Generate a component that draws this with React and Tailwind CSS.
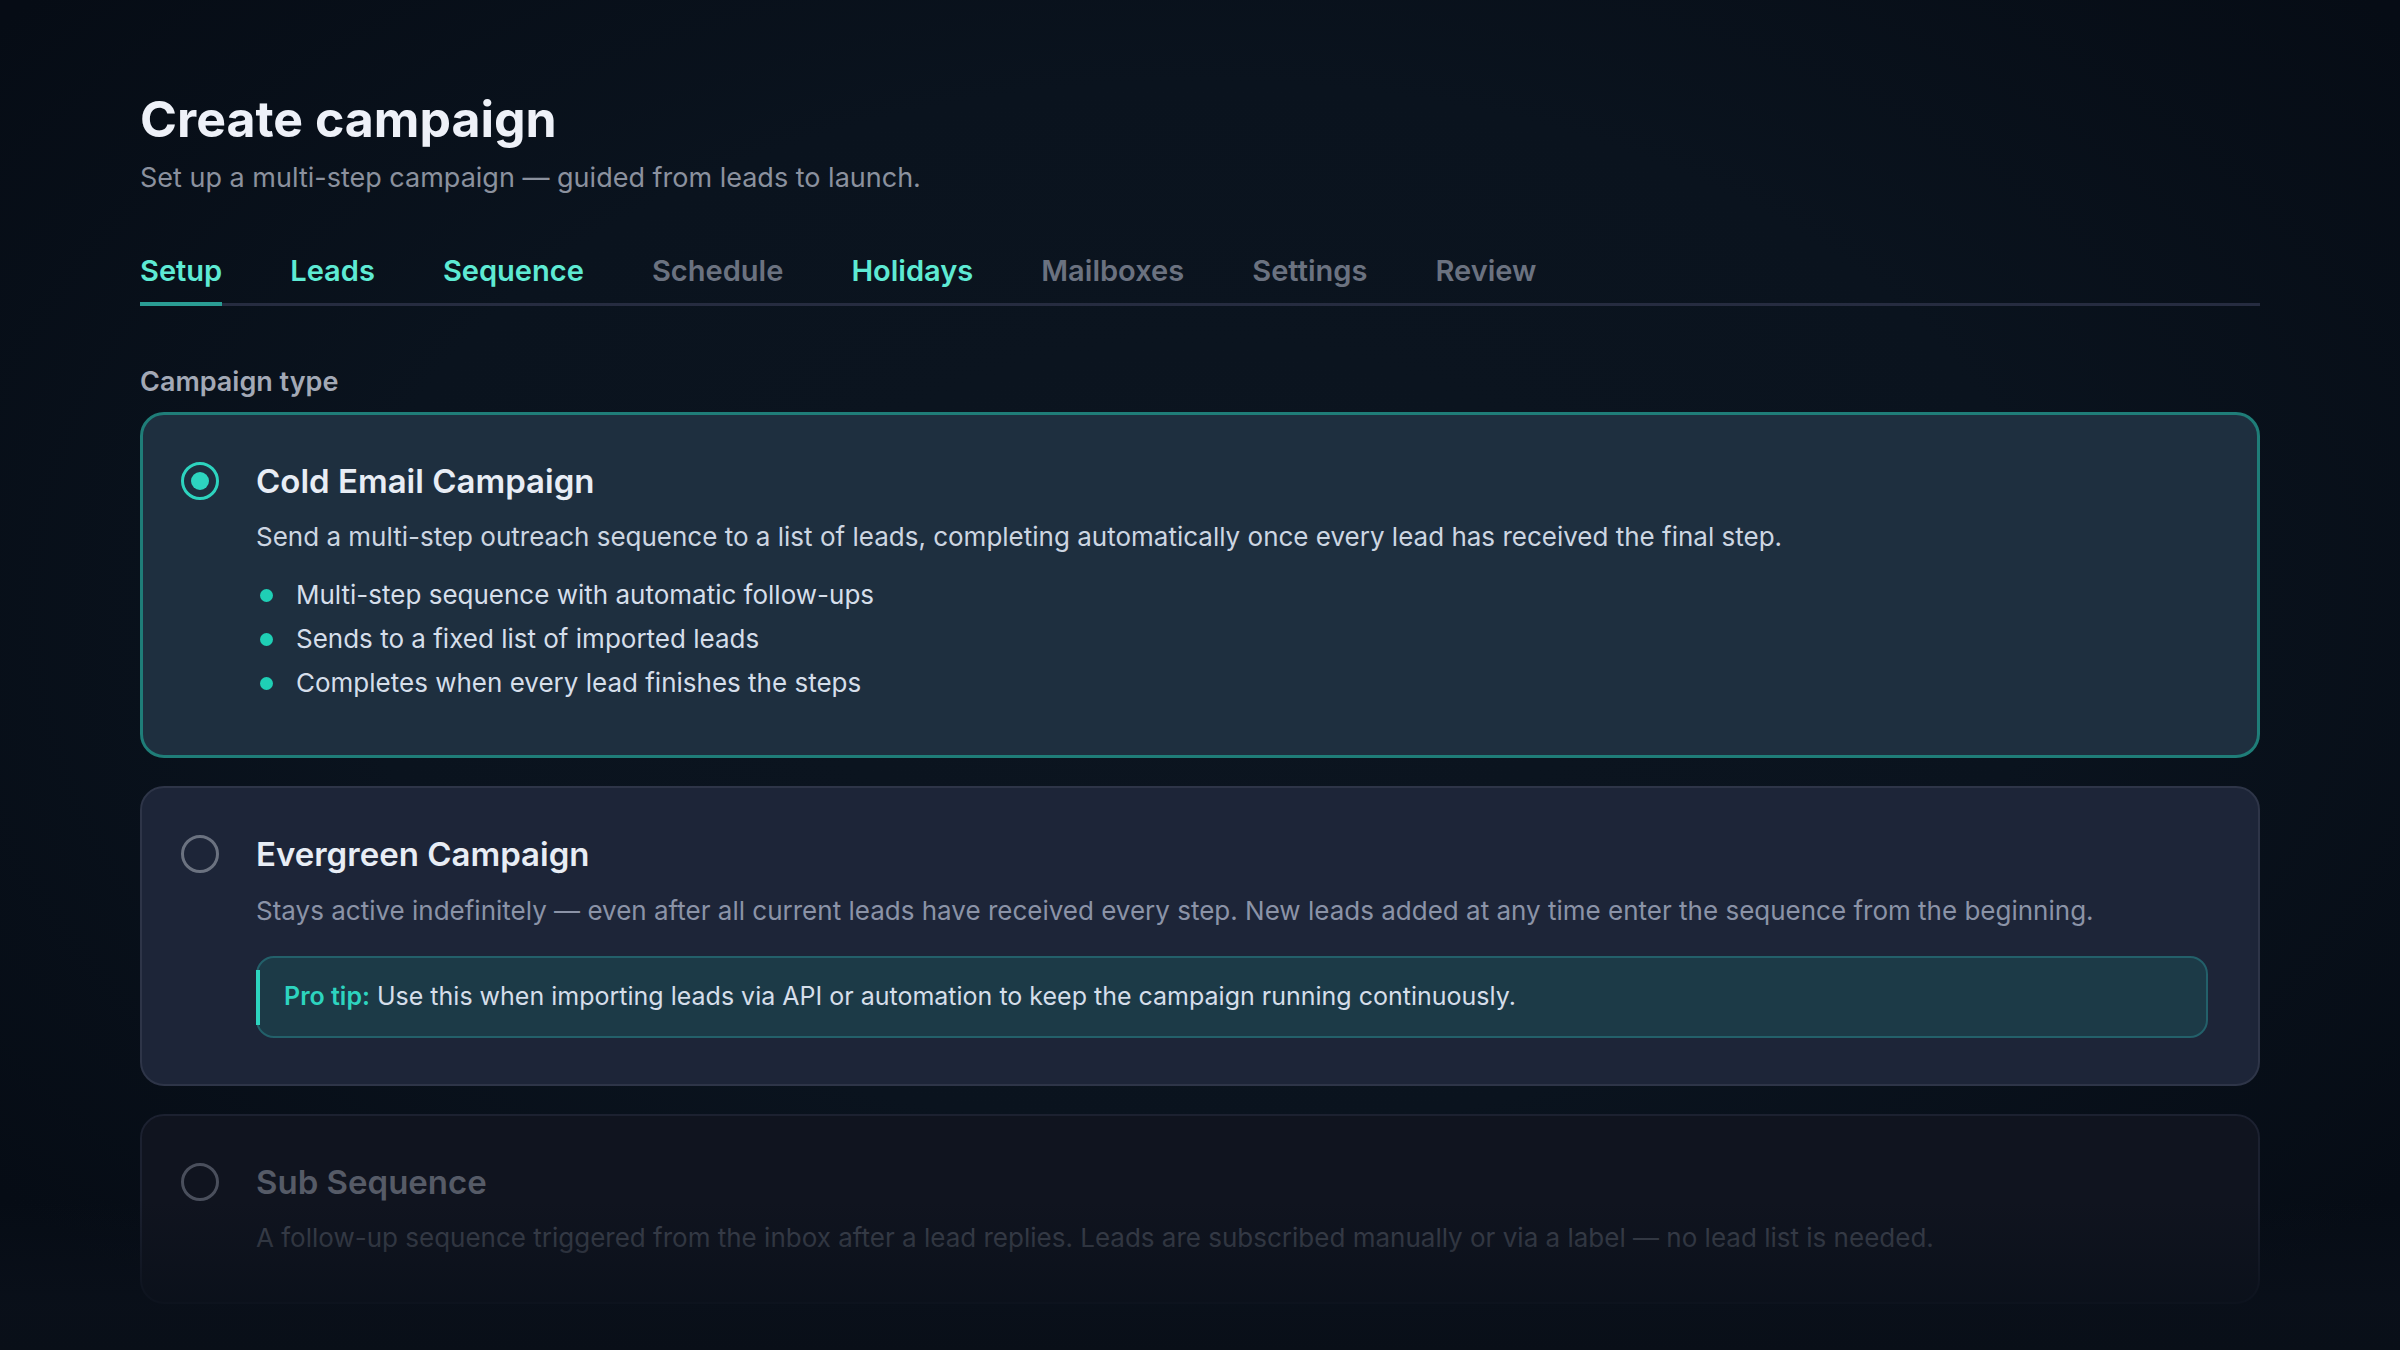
const tabs = [
  { name: "Setup", done: true, active: true },
  { name: "Leads", done: true },
  { name: "Sequence", done: true },
  { name: "Schedule" },
  { name: "Holidays", done: true },
  { name: "Mailboxes" },
  { name: "Settings" },
  { name: "Review" },
];

const bullets = [
  "Multi-step sequence with automatic follow-ups",
  "Sends to a fixed list of imported leads",
  "Completes when every lead finishes the steps",
];

const Radio = ({ checked, dim }) => (
  <div
    className={`flex h-[38px] w-[38px] shrink-0 items-center justify-center rounded-full border-[3px] ${
      checked ? "border-[#2dd4bf]" : dim ? "border-[#4a4f5c]" : "border-[#6b7280]"
    }`}
  >
    {checked && <div className="h-[18px] w-[18px] rounded-full bg-[#2dd4bf]" />}
  </div>
);

const App = () => {
  return (
    <div className="relative h-[1350px] w-full overflow-hidden bg-[#060d16] bg-[radial-gradient(ellipse_at_50%_45%,#0c1520_0%,#0a131e_50%,#060c15_90%)] px-[140px] pt-[90px] font-['Inter',sans-serif]">
      <h1 className="text-[50px] font-bold leading-[58px] text-[#eef1f8]">Create campaign</h1>
      <p className="mt-[11px] text-[27px] leading-[38px] text-[#8b919e]">
        Set up a multi-step campaign — guided from leads to launch.
      </p>

      {/* Tabs */}
      <div className="mt-[54px] flex gap-[68px] border-b-[3px] border-[#262c40]">
        {tabs.map((tab) => (
          <div
            key={tab.name}
            className={`-mb-[3px] border-b-[4px] pb-[11px] text-[29.05px] font-semibold leading-[40px] ${
              tab.active ? "border-[#2a9d94]" : "border-transparent"
            } ${tab.done ? "text-[#5eead4]" : "text-[#6b7280]"}`}
          >
            {tab.name}
          </div>
        ))}
      </div>

      <div className="mb-[12px] mt-[58px] text-[27px] font-semibold leading-[36px] text-[#a3a9b6]">Campaign type</div>

      <div className="flex flex-col gap-[28px]">
        {/* Cold email */}
        <div className="flex gap-[37px] rounded-[24px] border-[3px] border-[#1f7d78] bg-[#1e2f3f] px-[38px] pb-[51px] pt-[46px]">
          <div className="flex h-[40px] items-center"><Radio checked /></div>
          <div className="flex-1">
            <h2 className="text-[33px] font-semibold leading-[40px] text-[#e8edf5]">Cold Email Campaign</h2>
            <p className="mt-[16px] text-[26px] leading-[40px] text-[#cdd6e2]">
              Send a multi-step outreach sequence to a list of leads, completing automatically once every lead has received the final step.
            </p>
            <ul className="mt-[15px]">
              {bullets.map((b) => (
                <li key={b} className="flex h-[44px] items-center text-[26px] text-[#d5deea]">
                  <span className="ml-[4px] mr-[23px] mt-[2px] h-[13px] w-[13px] rounded-full bg-[#1fcfb5]" />
                  {b}
                </li>
              ))}
            </ul>
          </div>
        </div>

        {/* Evergreen */}
        <div className="flex gap-[37px] rounded-[24px] border-2 border-[#2e3548] bg-[#1d2538] pb-[46px] pl-[39px] pr-[50px] pt-[46px]">
          <div className="flex h-[40px] items-center"><Radio /></div>
          <div className="flex-1">
            <h2 className="text-[33px] font-semibold leading-[40px] text-[#e8edf5]">Evergreen Campaign</h2>
            <p className="mt-[17px] text-[26px] leading-[40px] text-[#8b93a7]">
              Stays active indefinitely — even after all current leads have received every step. New leads added at any time enter the sequence from the beginning.
            </p>
            <div className="relative mt-[25px] flex h-[82px] items-center rounded-[18px] border-2 border-[#23606a] bg-[#1c3a47] pl-[26px] text-[25px] text-[#d5deea]">
              <span className="absolute -left-[2px] top-[12px] h-[55px] w-[4px] bg-[#2dd4bf]" />
              <span className="mr-[7px] font-semibold text-[#2dd4bf]">Pro tip:</span>
              Use this when importing leads via API or automation to keep the campaign running continuously.
            </div>
          </div>
        </div>

        {/* Sub sequence */}
        <div className="flex h-[190px] gap-[37px] rounded-[24px] border-2 border-[#1c2130] bg-[#10141f] pl-[39px] pr-[50px] pt-[46px]">
          <div className="flex h-[40px] items-center"><Radio dim /></div>
          <div className="flex-1">
            <h2 className="text-[33px] font-semibold leading-[40px] text-[#565b67]">Sub Sequence</h2>
            <p className="mt-[16px] text-[26px] leading-[40px] text-[#444955]">
              A follow-up sequence triggered from the inbox after a lead replies. Leads are subscribed manually or via a label — no lead list is needed.
            </p>
          </div>
        </div>
      </div>

      {/* bottom fade over the last card */}
      <div className="pointer-events-none absolute inset-x-0 bottom-0 h-[150px] bg-gradient-to-b from-transparent via-[#0a101a]/85 via-70% to-[#090f18]" />
    </div>
  );
};

export default App;
